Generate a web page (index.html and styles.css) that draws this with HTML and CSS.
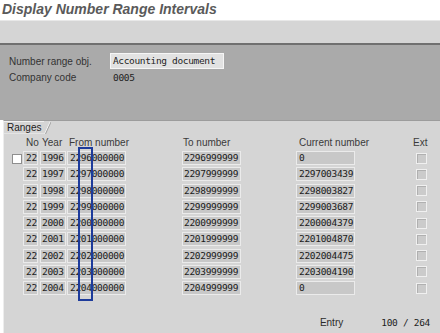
FILE: index.html
```html
<!DOCTYPE html>
<html lang="en">
<head>
  <meta charset="UTF-8" />
  <title>Display Number Range Intervals</title>
  <link rel="stylesheet" href="styles.css">
</head>
<body>
  <div id="title">Display Number Range Intervals</div>
  <div id="toolbar"></div>
  <div id="header-area">
    <div class="field-row">
      <span class="label">Number range obj.</span>
      <span class="field-box">Accounting document</span>
    </div>
    <div class="field-row">
      <span class="label">Company code</span>
      <span class="field-value">0005</span>
    </div>
  </div>
  <div id="ranges-panel">
    <div class="tab-strip">
      <div class="tab">Ranges</div>
      <svg class="tab-slant" width="7" height="13" viewBox="0 0 7 13">
        <line x1="0.5" y1="13" x2="6.5" y2="0" stroke="#f2f2f2" stroke-width="1" />
        <line x1="1.5" y1="13" x2="7.5" y2="0" stroke="#a4a4a4" stroke-width="1" />
      </svg>
    </div>
    <div class="grid-head">
      <span class="h-sel"></span>
      <span class="h-no">No</span>
      <span class="h-year">Year</span>
      <span class="h-from">From number</span>
      <span class="h-to">To number</span>
      <span class="h-cur">Current number</span>
      <span class="h-ext">Ext</span>
    </div>
    <div id="rows"></div>
    <div class="footer">
      <span class="entry-label">Entry</span>
      <span class="entry-count">100 / 264</span>
    </div>
    <div class="mark-box"></div>
  </div>
  <script>
    const ranges = [
      ['22', '1996', '2296000000', '2296999999', '0'],
      ['22', '1997', '2297000000', '2297999999', '2297003439'],
      ['22', '1998', '2298000000', '2298999999', '2298003827'],
      ['22', '1999', '2299000000', '2299999999', '2299003687'],
      ['22', '2000', '2200000000', '2200999999', '2200004379'],
      ['22', '2001', '2201000000', '2201999999', '2201004870'],
      ['22', '2002', '2202000000', '2202999999', '2202004475'],
      ['22', '2003', '2203000000', '2203999999', '2203004190'],
      ['22', '2004', '2204000000', '2204999999', '0']
    ];

    const rows = document.getElementById('rows');
    ranges.forEach((r, i) => {
      const row = document.createElement('div');
      row.className = 'row';
      const sel = document.createElement('span');
      sel.className = 'c-sel';
      if (i === 0) {
        const box = document.createElement('span');
        box.className = 'sel-box';
        sel.appendChild(box);
      }
      row.appendChild(sel);
      ['c-no', 'c-year', 'c-from', 'c-to', 'c-cur'].forEach((cls, k) => {
        const cell = document.createElement('span');
        cell.className = 'cell ' + cls;
        cell.textContent = r[k];
        row.appendChild(cell);
      });
      const ext = document.createElement('span');
      ext.className = 'c-ext';
      row.appendChild(ext);
      rows.appendChild(row);
    });
  </script>
</body>
</html>
```

FILE: styles.css
```css
:root {
  --mono: "DejaVu Sans Mono", "Liberation Mono", monospace;
  --sans: "Liberation Sans", Arial, sans-serif;
  --panel: #d5d5d5;
  --area: #aaaaaa;
  --cell: #c8c8c8;
  --cell-edge: #ebebeb;
}
body {
  margin: 0;
  width: 440px;
  height: 333px;
  overflow: hidden;
  background: white;
  font-family: var(--sans);
  color: #2a2a2a;
}
#title {
  height: 20px;
  padding-left: 2px;
  font-size: 14px;
  line-height: 18px;
  font-weight: bold;
  font-style: italic;
  color: #5a5a5a;
}
#toolbar {
  height: 22px;
  background: #d5d5d5;
  border-top: 1px solid #e8e8e8;
  border-bottom: 2px solid #707070;
}
#header-area {
  box-sizing: border-box;
  height: 75px;
  padding: 8px 0 0 9px;
  background: var(--area);
}
.field-row {
  display: flex;
  align-items: center;
  height: 16px;
}
.label {
  width: 101px;
  font-size: 10px;
  color: #333;
}
.field-box {
  box-sizing: border-box;
  width: 114px;
  height: 16px;
  padding-left: 2px;
  background: #e2e2e2;
  border: 1px solid #f6f6f6;
  font-family: var(--mono);
  font-size: 9.5px;
  letter-spacing: -0.35px;
  line-height: 14px;
  color: #1e1e1e;
}
.field-value {
  padding-left: 3px;
  font-family: var(--mono);
  font-size: 9.5px;
  letter-spacing: -0.3px;
  color: #1e1e1e;
}
#ranges-panel {
  position: relative;
  box-sizing: border-box;
  height: 213px;
  margin-left: 3px;
  background: var(--panel);
  border-top: 1px solid #9c9c9c;
  border-left: 1px solid #ededed;
}
.tab-strip {
  display: flex;
  height: 13px;
}
.tab {
  width: 40px;
  padding-left: 3px;
  font-size: 10px;
  line-height: 12px;
  color: #222;
  border-top: 1px solid #f0f0f0;
  border-bottom: 1px solid #e4e4e4;
  box-sizing: border-box;
  height: 13px;
}
.tab-slant {
  display: block;
}
.grid-head {
  display: flex;
  align-items: center;
  height: 17px;
  font-size: 10px;
  color: #3a3a3a;
}
.h-sel { width: 19px; }
.h-no { width: 12px; padding-left: 3px; }
.h-year { width: 24px; margin-left: 2px; padding-left: 2px; }
.h-from { width: 57px; margin-left: 1px; padding-left: 2px; white-space: nowrap; }
.h-to { width: 58px; margin-left: 56px; padding-left: 1px; white-space: nowrap; }
.h-cur { width: 56px; margin-left: 55px; padding-left: 3px; white-space: nowrap; }
.h-ext { width: 16px; margin-left: 58px; }
#rows {
  height: 146.25px;
}
.row {
  display: flex;
  align-items: center;
  height: 14px;
  margin-bottom: 2.25px;
}
.c-sel {
  display: flex;
  width: 19px;
  height: 14px;
  align-items: center;
}
.sel-box {
  box-sizing: border-box;
  width: 10px;
  height: 10px;
  margin: 1px 0 0 8px;
  background: white;
  border: 1px solid #8e8e8e;
}
.cell {
  box-sizing: border-box;
  height: 14px;
  padding-left: 1px;
  background: var(--cell);
  border: 1px solid var(--cell-edge);
  font-family: var(--mono);
  font-size: 9.5px;
  letter-spacing: -0.3px;
  line-height: 12px;
  color: #1a1a1a;
  white-space: nowrap;
  overflow: hidden;
}
.c-no { width: 15px; padding-left: 2px; }
.c-year { width: 26px; margin-left: 2px; }
.c-from { width: 59px; margin-left: 1px; padding-left: 2px; }
.c-to { width: 59px; margin-left: 56px; }
.c-cur { width: 59px; margin-left: 55px; padding-left: 2px; }
.c-ext {
  box-sizing: border-box;
  width: 11px;
  height: 11px;
  margin-left: 61px;
  background: #cbcbcb;
  border: 1px solid #f0f0f0;
  box-shadow: inset 1px 1px 0 #b0b0b0;
}
.footer {
  display: flex;
  justify-content: flex-end;
  align-items: center;
  height: 16px;
  margin-top: 17px;
  padding-right: 10px;
}
.entry-label {
  font-size: 10px;
  color: #2a2a2a;
  margin-right: 38px;
}
.entry-count {
  font-family: var(--mono);
  font-size: 9.5px;
  letter-spacing: -0.3px;
  color: #1e1e1e;
}
.mark-box {
  position: absolute;
  left: 74px;
  top: 26px;
  box-sizing: border-box;
  width: 15px;
  height: 154px;
  border: 2px solid #1d3b9b;
}
```
